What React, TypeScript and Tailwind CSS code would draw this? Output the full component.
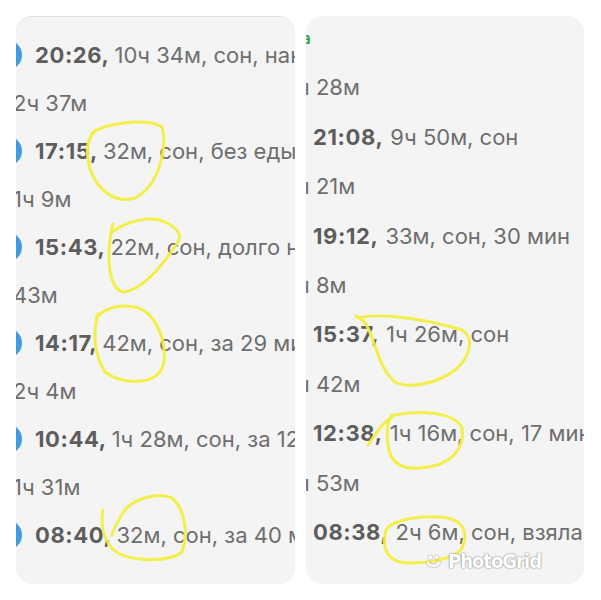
import React from "react";

type Row = { kind: "event"; time: string; rest: string } | { kind: "gap"; text: string };

const left: Row[] = [
  { kind: "event", time: "20:26,", rest: "10ч 34м, сон, накормила" },
  { kind: "gap", text: "2ч 37м" },
  { kind: "event", time: "17:15,", rest: "32м, сон, без еды" },
  { kind: "gap", text: "1ч 9м" },
  { kind: "event", time: "15:43,", rest: "22м, сон, долго не спала" },
  { kind: "gap", text: "43м" },
  { kind: "event", time: "14:17,", rest: "42м, сон, за 29 минут" },
  { kind: "gap", text: "2ч 4м" },
  { kind: "event", time: "10:44,", rest: "1ч 28м, сон, за 12 минут" },
  { kind: "gap", text: "1ч 31м" },
  { kind: "event", time: "08:40,", rest: "32м, сон, за 40 минут" },
];

const right: Row[] = [
  { kind: "gap", text: "ч 28м" },
  { kind: "event", time: "21:08,", rest: "9ч 50м, сон" },
  { kind: "gap", text: "ч 21м" },
  { kind: "event", time: "19:12,", rest: "33м, сон, 30 мин" },
  { kind: "gap", text: "ч 8м" },
  { kind: "event", time: "15:37,", rest: "1ч 26м, сон" },
  { kind: "gap", text: "ч 42м" },
  { kind: "event", time: "12:38,", rest: "1ч 16м, сон, 17 минут" },
  { kind: "gap", text: "ч 53м" },
  { kind: "event", time: "08:38,", rest: "2ч 6м, сон, взяла" },
];

const font = { fontFamily: "Inter, 'Liberation Sans', sans-serif" };

function LeftRow({ row }: { row: Row }) {
  if (row.kind === "gap") {
    return (
      <div className="h-12 flex items-center -ml-[3px] text-[22px] text-[#6e6e6e]">{row.text}</div>
    );
  }
  return (
    <div className="h-12 flex items-center">
      <div className="w-[30px] h-[30px] rounded-full bg-[#3e9be0] -ml-[24px] shrink-0" />
      <span className="ml-[13px] text-[22px] font-bold tracking-[0.6px] text-[#5d5d5d]">{row.time}</span>
      <span className="ml-[5px] text-[22px] text-[#6e6e6e]">{row.rest}</span>
    </div>
  );
}

function RightRow({ row }: { row: Row }) {
  if (row.kind === "gap") {
    return (
      <div className="h-[49.4px] flex items-center -ml-[9px] text-[22px] text-[#6e6e6e]">{row.text}</div>
    );
  }
  return (
    <div className="h-[49.4px] flex items-center">
      <span className="ml-[7px] text-[22px] font-bold tracking-[0.6px] text-[#5d5d5d]">{row.time}</span>
      <span className="ml-[7px] text-[22px] text-[#6e6e6e]">{row.rest}</span>
    </div>
  );
}

export default function App() {
  return (
    <div className="relative w-[601px] h-[600px] bg-white flex gap-[11px] p-4 overflow-hidden" style={font}>
      <div className="w-[279px] h-[568px] bg-[#f4f4f4] rounded-2xl overflow-hidden whitespace-nowrap pt-[14px] border-t border-[#e2e2e2]">
        {left.map((r, i) => (
          <LeftRow key={i} row={r} />
        ))}
      </div>
      <div className="w-[278px] h-[568px] bg-[#f4f4f4] rounded-2xl overflow-hidden whitespace-nowrap">
        <div className="h-[47.3px] flex items-center -ml-[4px] text-[15px] font-semibold text-[#2f9a47]">а</div>
        {right.map((r, i) => (
          <RightRow key={i} row={r} />
        ))}
      </div>

      <svg className="absolute left-0 top-0 pointer-events-none" width="601" height="600" viewBox="0 0 601 600">
        <g fill="none" stroke="#f3ef3c" strokeWidth="3" strokeLinecap="round" strokeLinejoin="round" opacity="0.92">
          <path d="M92 133 C108 122 148 118 162 127 C168 145 160 185 135 198 C112 205 92 185 88 160 C86 146 89 136 96 130" />
          <path d="M112 232 C125 222 150 215 165 222 C178 228 182 235 178 242 C165 262 145 288 125 292 C112 292 108 270 109 250 C110 238 111 230 113 224" />
          <path d="M96 318 C110 302 140 302 152 318 C165 335 168 360 160 372 C150 385 120 384 105 372 C95 355 92 335 98 314" />
          <path d="M103 510 C100 525 104 545 118 553 C135 562 170 562 182 552 C188 535 186 510 172 498 C158 492 135 498 125 510 C118 520 114 528 112 535" />
          <path d="M358 318 C380 312 430 320 462 330 C475 338 470 358 455 370 C440 382 410 390 395 382 C380 370 376 345 368 328 C365 322 362 318 356 316" />
          <path d="M368 445 C378 430 385 420 395 415 C420 410 455 412 462 428 C465 450 450 466 420 468 C400 470 390 462 388 445 C386 430 388 420 392 415" />
          <path d="M386 530 C392 520 420 514 448 518 C465 522 468 535 462 548 C455 560 420 565 400 562 C385 558 382 545 386 530" />
        </g>
      </svg>

      <div
        className="absolute left-[425px] top-[546px] flex items-center gap-[6px] text-[20px] font-bold text-white tracking-[-1px]"
        style={{ fontFamily: "'Liberation Sans Narrow', 'DejaVu Sans Condensed', sans-serif", textShadow: "0 0 1px #8a8a8a, 0 0 2px #8a8a8a" }}
      >
        <svg width="17" height="17" viewBox="0 0 16 16" style={{ filter: "drop-shadow(0 0 1px #8a8a8a)" }}>
          <g fill="none" stroke="#ffffff" strokeWidth="2.2" strokeLinecap="round">
            <path d="M3 9 C4 13 12 13 13 9" />
          </g>
          <circle cx="5" cy="4" r="1.6" fill="#fff" />
          <circle cx="11" cy="4" r="1.6" fill="#fff" />
        </svg>
        <span>PhotoGrid</span>
      </div>
    </div>
  );
}
